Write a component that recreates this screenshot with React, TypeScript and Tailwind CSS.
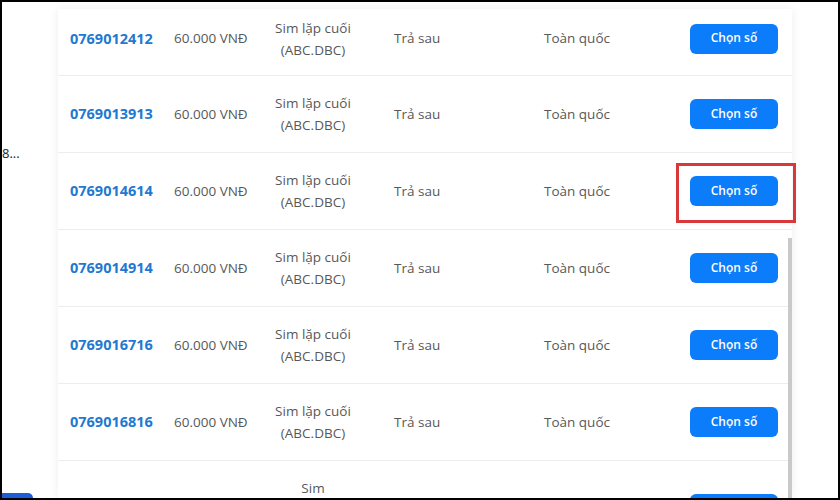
import React from "react";

const rows = [
  "0769012412",
  "0769013913",
  "0769014614",
  "0769014914",
  "0769016716",
  "0769016816",
];

function Row({ num, first }: { num: string; first?: boolean }) {
  return (
    <div
      className={`flex items-center border-b border-[#ededed] ${
        first ? "h-[67px] pb-[7px]" : "h-[77px]"
      }`}
    >
      <div className="w-[116px] pl-[12px] text-[14.5px] font-bold text-[#1f79d1]">{num}</div>
      <div className="w-[88px] text-[13.5px] text-[#585858]">60.000 VNĐ</div>
      <div className="w-[102px] text-center text-[13.5px] leading-[22px] text-[#585858]">
        Sim lặp cuối
        <br />
        (ABC.DBC)
      </div>
      <div className="w-[150px] pl-[30px] text-[13.5px] text-[#585858]">Trả sau</div>
      <div className="w-[146px] pl-[30px] text-[13.5px] text-[#585858]">Toàn quốc</div>
      <div className="pl-[30px]">
        <button className="flex h-[30px] w-[88px] items-center justify-center rounded-[6px] bg-[#0b7cfa] pb-[1px] text-[12px] font-semibold text-white">
          Chọn số
        </button>
      </div>
    </div>
  );
}

export default function App() {
  return (
    <div
      className="relative flex h-[500px] w-[840px] overflow-hidden border-2 border-black bg-white"
      style={{ fontFamily: '"Open Sans", "Noto Sans", sans-serif' }}
    >
      <div className="flex w-[56px] flex-col">
        <div className="mt-[142px] text-[13px] leading-[18px] text-[#222]">8...</div>
        <div className="flex-1" />
        <div className="h-[5px] w-[31px] rounded-tr-[6px] bg-[#1a5fd8]" />
      </div>
      <div className="relative mt-[7px] w-[734px] bg-white shadow-[0_0_10px_rgba(0,0,0,0.07)]">
        {rows.map((r, i) => (
          <Row key={r} num={r} first={i === 0} />
        ))}
        <div className="flex h-[77px] items-start">
          <div className="w-[116px]" />
          <div className="w-[88px]" />
          <div className="w-[102px] pt-[16px] text-center text-[13.5px] leading-[22px] text-[#585858]">Sim</div>
          <div className="w-[150px]" />
          <div className="w-[146px]" />
          <div className="pl-[30px] pt-[33px]">
            <div className="h-[30px] w-[88px] rounded-[6px] bg-[#0b7cfa]" />
          </div>
        </div>
        <div className="absolute right-0 top-[229px] bottom-[-20px] w-[4px] bg-[#c9c9c9]" />
        <div className="absolute left-[618px] top-[154px] h-[60px] w-[120px] border-[3px] border-[#d8383a]" />
      </div>
      <div className="flex-1" />
    </div>
  );
}
